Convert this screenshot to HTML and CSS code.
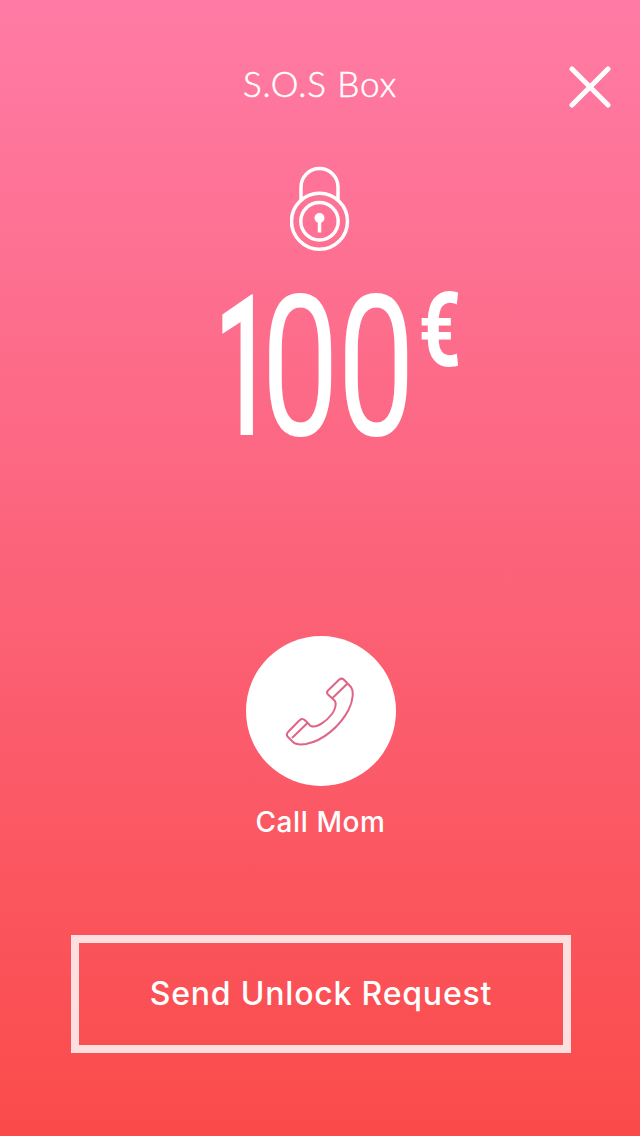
FILE: index.html
```html
<!DOCTYPE html>
<html lang="en">
<head>
<meta charset="utf-8">
<title>S.O.S Box</title>
<link rel="stylesheet" href="styles.css">
</head>
<body>
<main class="screen">
  <header class="header">
    <h1 class="title">S.O.S Box</h1>
    <button class="close" aria-label="Close">
      <svg width="42" height="42" viewBox="0 0 42 42"><path d="M3 3L39 39M39 3L3 39"/></svg>
    </button>
  </header>
  <svg class="lock" width="60" height="86" viewBox="0 0 60 86">
    <path d="M11 34V21A18.500 18.500 0 0 1 48 21V34"/>
    <circle cx="29.500" cy="55.300" r="28"/>
    <circle cx="29.500" cy="55.300" r="18.700"/>
    <circle class="solid" cx="29.500" cy="52" r="5"/>
    <path class="key" d="M29.500 53V66.500"/>
  </svg>
  <svg class="amount" width="270" height="236" viewBox="0 0 270 236">
    <text class="digits one" transform="translate(3.800 183) scale(.53 1)">1</text>
    <text class="digits" transform="translate(0 183) scale(.7 1)" x="73.700 182.300">00</text>
    <text class="euro" transform="translate(208.500 114) scale(.72 1)">€</text>
  </svg>
  <button class="call">
    <span class="call-disc">
      <svg width="90" height="90" viewBox="0 0 90 90">
        <path d="M36 60C42 62.500 52 54.500 57 48C61 42.500 61.500 36.500 59.500 34.500L53 28.500Q51 26.500 53 24.500L64 13.800Q66.500 11.500 69 13.800L75.500 20.500C79 24.500 78.500 34 73.500 44C65 60 48 75 31 78C24 79 20 78 18 76L12.500 70.500Q11 68.500 13 66L24 54.800Q27 51.500 30 54.300L34 58.300Q35 59.500 36 60Z"/>
        <path d="M57 32.500L72.500 17.500M17 72L32.500 57"/>
      </svg>
    </span>
    <span class="call-label">Call Mom</span>
  </button>
  <button class="unlock">Send Unlock Request</button>
</main>
</body>
</html>
```
FILE: styles.css
```css
* { box-sizing: border-box; }
body { margin: 0; }
button { padding: 0; border: 0; background: none; color: inherit; font: inherit; }
.screen {
  display: flex; flex-direction: column; align-items: center;
  width: 640px; height: 1136px; color: #fff; overflow: hidden;
  background: linear-gradient(#ff7ba5, #fc657e 45%, #fa4b4a);
  font-family: Lato, "Liberation Sans", sans-serif;
}
.header {
  display: grid; grid-template-columns: 71px 1fr 71px; align-items: center;
  width: 100%; padding-top: 62px;
}
.title {
  grid-column: 2; margin: -3px 0 3px; text-align: center; white-space: nowrap;
  font-size: 35px; line-height: 48px; font-weight: 300; letter-spacing: .9px;
  -webkit-text-stroke: .5px #fff;
}
.close { display: flex; padding-top: 2px; }
.close svg { fill: none; stroke: #fff; stroke-width: 5; stroke-linecap: round; }
.lock { flex: none; margin-top: 56px; fill: none; stroke: #fff; stroke-width: 3.5; }
.lock .solid { fill: #fff; stroke: none; }
.amount { flex: none; margin: 0 0 0 50px; fill: #fff; overflow: visible; }
.digits { font: 400 197px Roboto, sans-serif; }
.digits.one { font-weight: 500; }
.euro { font: 700 103px Roboto, sans-serif; }
.call { display: flex; flex-direction: column; align-items: center; margin: 147.5px 0 0 1px; }
.call-disc {
  display: flex; align-items: center; justify-content: center;
  width: 150px; height: 150px; border-radius: 50%; background: #fff;
}
.call-disc svg { margin-right: 2px; fill: none; stroke: #e06486; stroke-width: 2; stroke-linejoin: round; }
.call-label { margin-top: 17px; font: 500 28px/38px Inter, sans-serif; letter-spacing: .6px; }
.unlock {
  width: 500px; height: 118px; margin: 94.5px 0 0 2px;
  border: 8px solid #fddfe0; font: 500 32px/1 Inter, sans-serif; letter-spacing: .8px;
}
```
